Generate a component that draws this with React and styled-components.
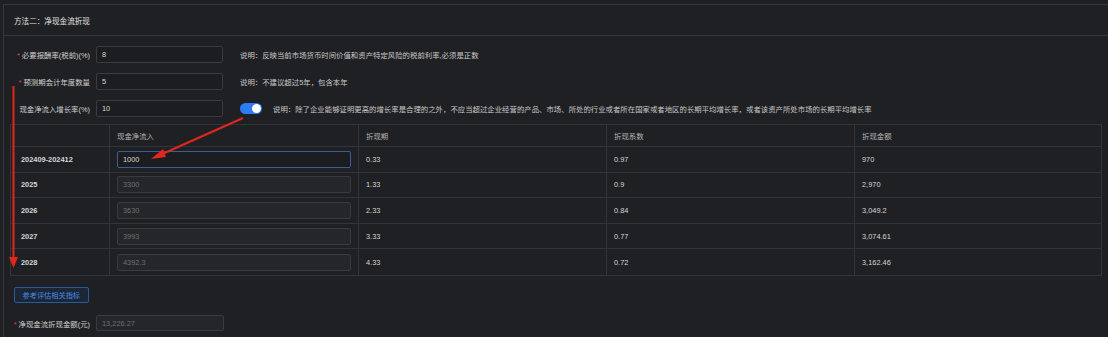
import React from "react";
import styled, { createGlobalStyle } from "styled-components";

const GlobalStyle = createGlobalStyle`
  html, body {
    margin: 0;
    padding: 0;
    background: #1f2023;
  }
  body {
    font-family: "Liberation Sans", "Noto Sans CJK SC", sans-serif;
    font-size: 7.4px;
    color: #d4d4d4;
  }
`;

const Page = styled.div`
  position: relative;
  width: 1108px;
  height: 337px;
  overflow: hidden;
  padding: 4px 0 0 3px;
  box-sizing: border-box;
`;

const Panel = styled.div`
  border: 1px solid #36373a;
  border-right: none;
  border-bottom: none;
  height: 100%;
`;

const Header = styled.div`
  height: 30px;
  display: flex;
  align-items: center;
  padding-left: 10px;
  border-bottom: 1px solid #36373a;
  color: #e2e2e2;
  font-size: 7.6px;
`;

const Body = styled.div`
  padding: 10px 0 0 0;
`;

const FormRow = styled.div`
  display: flex;
  align-items: center;
  height: 17px;
  margin-bottom: ${(p) => p.$gap ?? 10}px;
`;

const Label = styled.label`
  width: 86px;
  margin-right: 6px;
  text-align: right;
  color: #d0d0d0;
  white-space: nowrap;
`;

const Star = styled.span`
  color: #e0413b;
  margin-right: 2px;
`;

const Input = styled.div`
  box-sizing: border-box;
  width: ${(p) => p.$w || 127}px;
  height: ${(p) => p.$h || 17}px;
  display: flex;
  align-items: center;
  padding-left: 5px;
  border: 1px solid ${(p) => (p.$active ? "#3b5f95" : "#3a3b3f")};
  background: ${(p) => (p.$disabled ? "#252629" : "#1c1d20")};
  color: ${(p) => (p.$disabled ? "#6f7074" : "#d6d6d6")};
  border-radius: 2px;
`;

const Note = styled.span`
  margin-left: ${(p) => p.$ml || 17}px;
  color: #c8c8c8;
  white-space: nowrap;
`;

const Toggle = styled.span`
  margin-left: 17px;
  width: 22px;
  height: 11px;
  border-radius: 6px;
  background: #2d7cf4;
  position: relative;
  display: inline-block;
  &::after {
    content: "";
    position: absolute;
    right: 1px;
    top: 1px;
    width: 9px;
    height: 9px;
    border-radius: 50%;
    background: #ffffff;
  }
`;

const Table = styled.div`
  margin: 7px 0 0 6px;
  width: 1090px;
  border: 1px solid #333438;
  display: grid;
  grid-template-columns: 98px 249px 248px 248px 1fr;
`;

const Cell = styled.div`
  box-sizing: border-box;
  height: ${(p) => (p.$head ? 22 : 25.6)}px;
  display: flex;
  align-items: center;
  padding-left: ${(p) => (p.$first ? 10 : 7)}px;
  padding-right: 7px;
  border-bottom: ${(p) => (p.$last ? "none" : "1px solid #333438")};
  border-left: ${(p) => (p.$first ? "none" : "1px solid #333438")};
  color: ${(p) => (p.$head ? "#b4b4b4" : "#d6d6d6")};
  font-weight: ${(p) => (p.$bold ? 700 : 400)};
`;

const Button = styled.button`
  display: block;
  margin: 11px 0 0 10px;
  height: 16px;
  padding: 0 7.5px;
  font: inherit;
  font-size: 7.2px;
  color: #4a8be6;
  background: #1b2636;
  border: 1px solid #2b5a9c;
  border-radius: 2px;
`;

const Footer = styled.div`
  margin-top: 12px;
  display: flex;
  align-items: center;
  height: 17px;
`;

const Overlay = styled.svg`
  position: absolute;
  left: 0;
  top: 0;
  pointer-events: none;
`;

const rows = [
  ["202409-202412", "1000", "0.33", "0.97", "970"],
  ["2025", "3300", "1.33", "0.9", "2,970"],
  ["2026", "3630", "2.33", "0.84", "3,049.2"],
  ["2027", "3993", "3.33", "0.77", "3,074.61"],
  ["2028", "4392.3", "4.33", "0.72", "3,162.46"],
];

const heads = ["", "现金净流入", "折现期", "折现系数", "折现金额"];

export default function App() {
  return (
    <Page>
      <GlobalStyle />
      <Panel>
        <Header>方法二：净现金流折现</Header>
        <Body>
          <FormRow>
            <Label>
              <Star>*</Star>必要报酬率(税前)(%)
            </Label>
            <Input>8</Input>
            <Note>说明：反映当前市场货币时间价值和资产特定风险的税前利率,必须是正数</Note>
          </FormRow>
          <FormRow>
            <Label>
              <Star>*</Star>预测期会计年度数量
            </Label>
            <Input>5</Input>
            <Note>说明：不建议超过5年，包含本年</Note>
          </FormRow>
          <FormRow $gap={0}>
            <Label>现金净流入增长率(%)</Label>
            <Input>10</Input>
            <Toggle />
            <Note $ml={11}>
              说明：除了企业能够证明更高的增长率是合理的之外，不应当超过企业经营的产品、市场、所处的行业或者所在国家或者地区的长期平均增长率，或者该资产所处市场的长期平均增长率
            </Note>
          </FormRow>
          <Table>
            {heads.map((h, i) => (
              <Cell key={"h" + i} $head $first={i === 0}>
                {h}
              </Cell>
            ))}
            {rows.map((r, ri) =>
              r.map((v, ci) => (
                <Cell
                  key={ri + "-" + ci}
                  $first={ci === 0}
                  $bold={ci === 0}
                  $last={ri === rows.length - 1}
                >
                  {ci === 1 ? (
                    <Input $w={234} $active={ri === 0} $disabled={ri > 0}>
                      {v}
                    </Input>
                  ) : (
                    v
                  )}
                </Cell>
              ))
            )}
          </Table>
          <Button>参考评估相关指标</Button>
          <Footer>
            <Label>
              <Star>*</Star>净现金流折现金额(元)
            </Label>
            <Input $disabled $w={128} $h={16}>
              13,226.27
            </Input>
          </Footer>
        </Body>
      </Panel>
      <Overlay width="1108" height="337" viewBox="0 0 1108 337">
        <line x1="13.5" y1="86" x2="13.5" y2="258" stroke="#e3261c" strokeWidth="2" />
        <polygon points="9,257 18,257 13.5,268" fill="#e3261c" />
        <line x1="243" y1="118" x2="160" y2="155" stroke="#e3261c" strokeWidth="2" />
        <polygon points="151,159 163,149 166,157" fill="#e3261c" />
      </Overlay>
    </Page>
  );
}
